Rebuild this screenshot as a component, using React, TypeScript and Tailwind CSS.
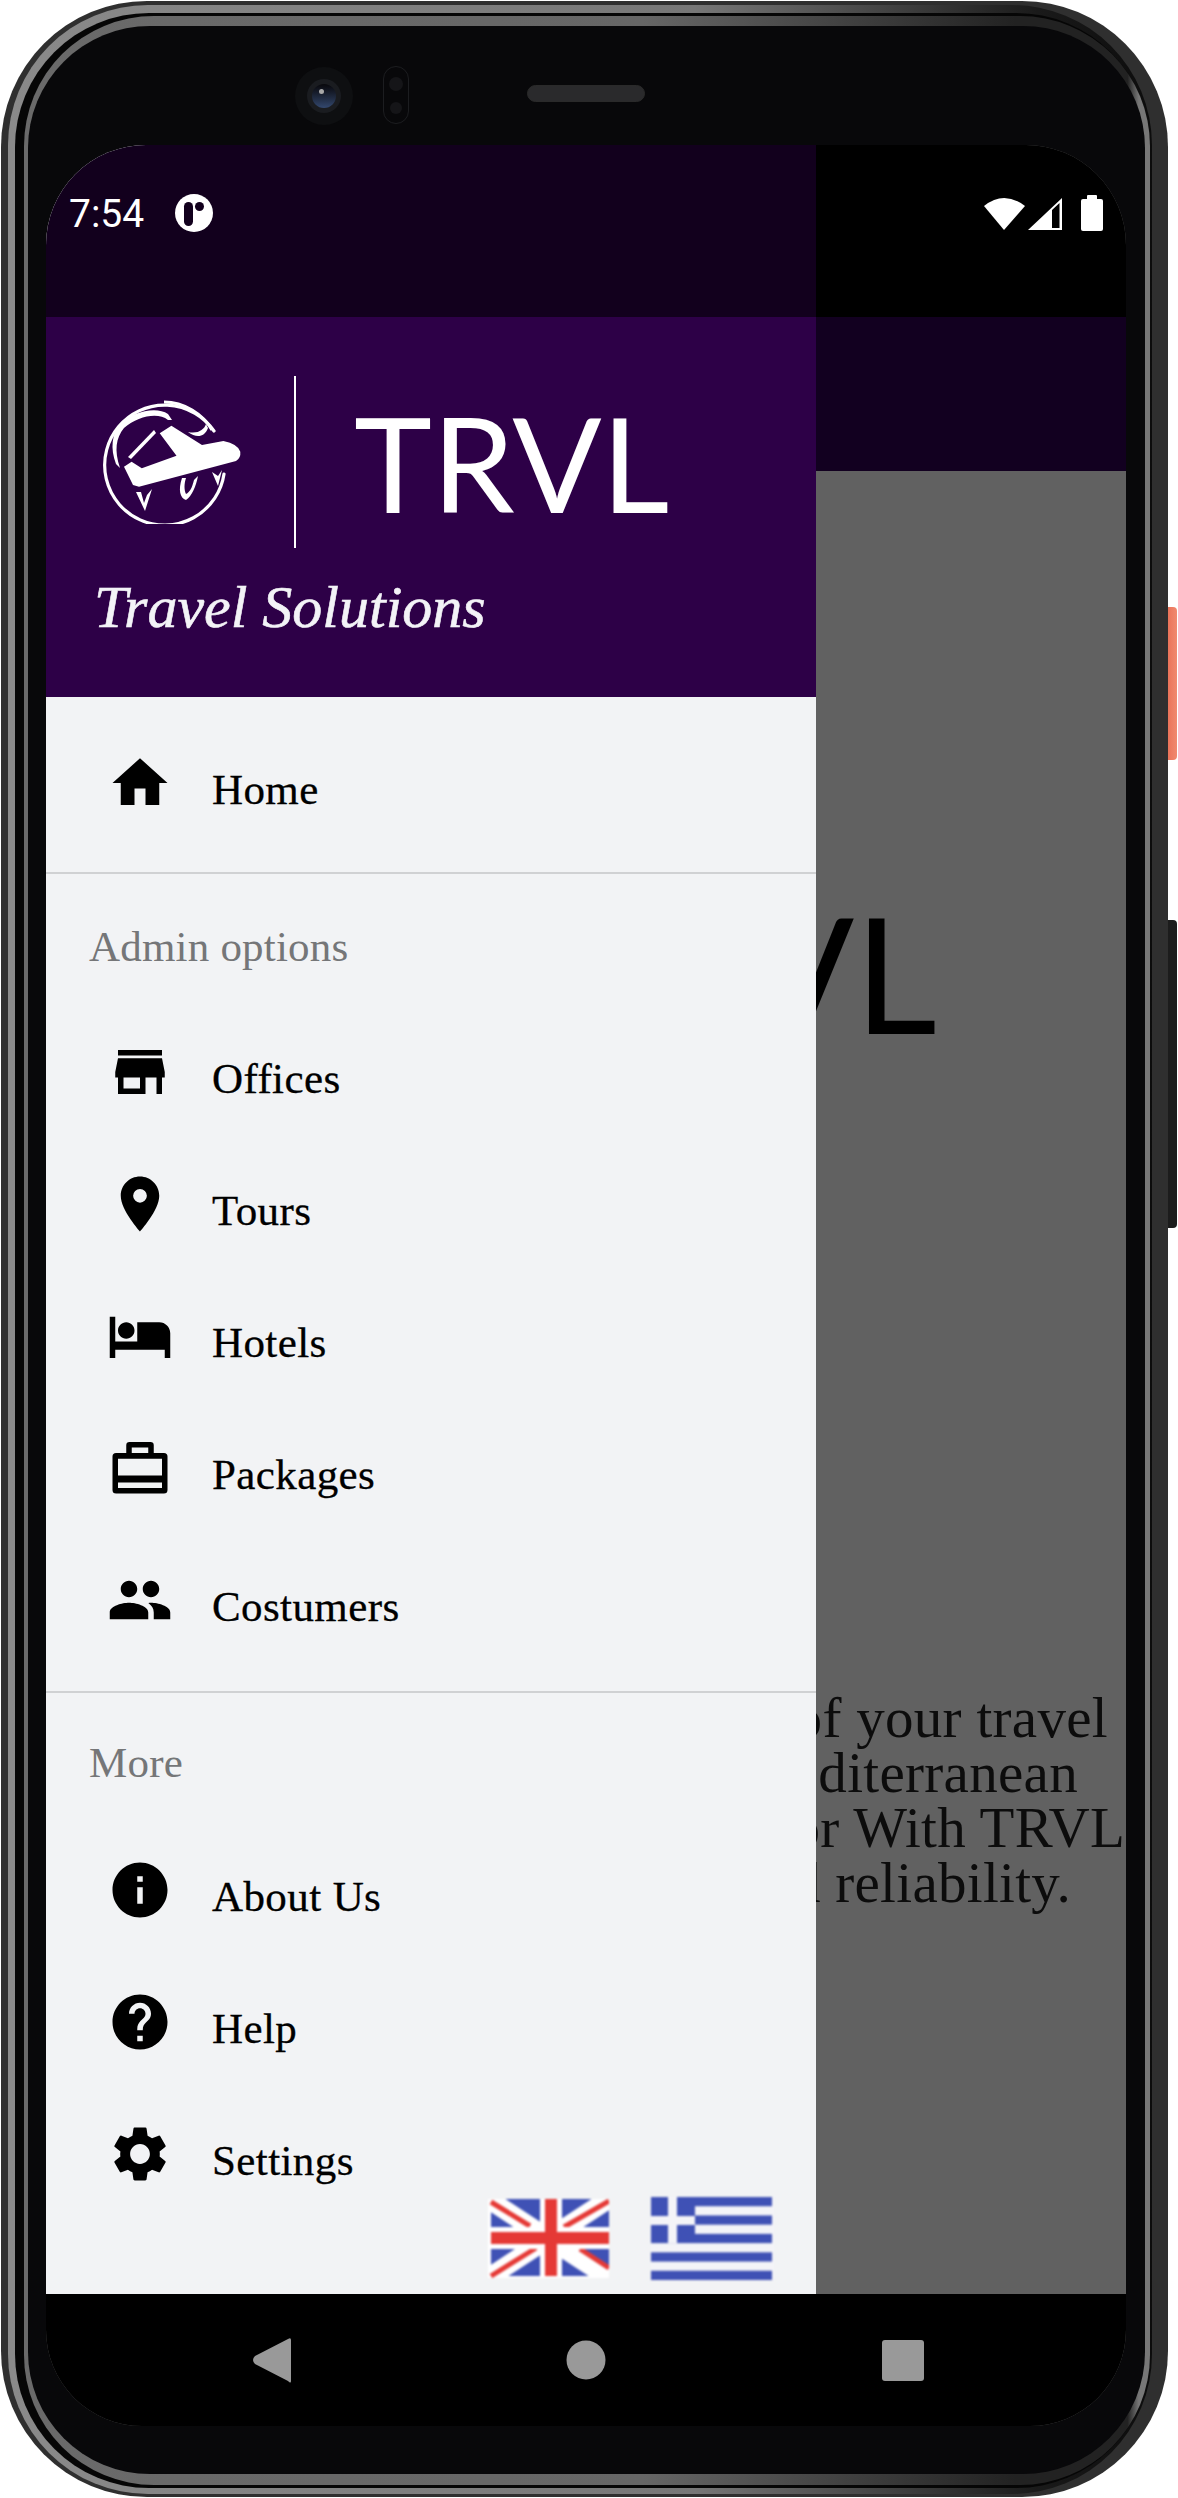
import React from "react";
import {
  MdHome,
  MdStore,
  MdPlace,
  MdHotel,
  MdPeople,
  MdInfo,
  MdHelp,
  MdSettings,
} from "react-icons/md";

type IconProps = { size?: number; className?: string };
type Item = { label: string; icon: React.ComponentType<IconProps> };

function Briefcase({ size = 66, className }: IconProps) {
  return (
    <svg viewBox="0 0 24 24" width={size} height={size} className={className} fill="currentColor">
      <path
        fillRule="evenodd"
        d="M8.2 2.5 H15.8 Q17 2.5 17 3.7 V6.5 H20.7 Q22 6.5 22 7.8 V20 Q22 21.3 20.7 21.3 H3.3 Q2 21.3 2 20 V7.8 Q2 6.5 3.3 6.5 H7 V3.7 Q7 2.5 8.2 2.5 Z M9 4.5 V6.5 H15 V4.5 Z M4 8.6 V14.7 H20 V8.6 Z M4 17.3 V19.3 H20 V17.3 Z"
      />
    </svg>
  );
}

function Row({ label, icon: Icon }: Item) {
  return (
    <div className="flex h-[132px] items-center pl-[61px]">
      <Icon size={66} className="shrink-0 text-black" />
      <span className="ml-[39px] pt-[13px] font-['Liberation_Serif',serif] text-[43px] leading-[50px] tracking-[0.4px] text-black [-webkit-text-stroke:0.3px_#000]">
        {label}
      </span>
    </div>
  );
}

function Label({ children }: { children: React.ReactNode }) {
  return (
    <div className="flex h-[50px] items-center pl-[43px] font-['Liberation_Serif',serif] text-[43px] leading-[50px] tracking-[0.2px] text-[#757678]">
      {children}
    </div>
  );
}

function Logo() {
  return (
    <svg viewBox="0 0 140 124" className="h-[124px] w-[140px] shrink-0" fill="none">
      <path d="M112 31 A60 60 0 1 0 122 74" stroke="#fff" strokeWidth="3.2" strokeLinecap="round" />
      <path d="M110 30 C101 14 82 2 62 2" stroke="#fff" strokeWidth="3" />
      <path
        d="M14 64 C8 48 10 34 18 24 C30 12 54 6 66 14 L70 20 L66 20 C56 12 36 16 22 28 C14 38 12 50 18 68 Z"
        fill="#fff"
      />
      <path d="M26 57 L52 30 L54 33 L29 59 Z" fill="#fff" />
      <path d="M86 32 C96 34 102 30 104 24 L106 28 C102 38 94 38 86 32 Z" fill="#fff" />
      <path
        d="M57.7 33.3 L69.4 25.7 L100 45 L121.4 41 Q136 44 138.3 51.7 Q139 58 134 61 L37 86.7 L31 85 L22 66.7 L29.6 61.7 L39.8 68.3 L74.5 55.7 Z"
        fill="#fff"
      />
      <path d="M34 92 L43 111 L50 89 L45 95 L42 103 L39 92 Z" fill="#fff" />
      <path d="M80 78 C76 90 78 98 84 100 C90 96 94 86 96 76 L92 80 C90 88 88 92 84 94 C82 90 82 84 84 78 Z" fill="#fff" />
      <path d="M110 72 L116 86 L120 70 L116 76 Z" fill="#fff" />
    </svg>
  );
}

function UKFlag() {
  return (
    <svg viewBox="0 0 121 79" className="h-[79px] w-[121px] blur-[1px]">
      <rect width="121" height="79" fill="#fff" />
      <rect x="3" y="0" width="118" height="77" fill="#3f51b5" />
      <path d="M0 0 L121 79 M121 0 L0 79" stroke="#fff" strokeWidth="19" />
      <path d="M3 3 L42 27 M121 2 L76 28 M3 77 L48 49 M121 69 L92 50" stroke="#e53935" strokeWidth="5" />
      <rect x="52" y="0" width="22" height="79" fill="#fff" />
      <rect x="0" y="28" width="121" height="22" fill="#fff" />
      <rect x="57" y="0" width="12" height="77" fill="#e53935" />
      <rect x="3" y="33" width="118" height="12" fill="#e53935" />
    </svg>
  );
}

function GreekFlag() {
  const stripes = [0, 2, 4, 6, 8];
  return (
    <svg viewBox="0 0 123 83" className="h-[83px] w-[123px] blur-[1px]">
      <rect width="123" height="83" fill="#f4f4f8" />
      {stripes.map((s) => (
        <rect key={s} x="0" y={s * 9.22} width="121" height="9.22" fill="#3f51b5" />
      ))}
      <rect x="0" y="0" width="44" height="46" fill="#3f51b5" />
      <rect x="17" y="0" width="9" height="46" fill="#f4f4f8" />
      <rect x="0" y="19" width="44" height="9" fill="#f4f4f8" />
    </svg>
  );
}

export default function App() {
  return (
    <div className="relative h-[2498px] w-[1178px] overflow-hidden bg-white">
      {/* side buttons */}
      <div className="absolute left-[1164px] top-[607px] h-[153px] w-[13px] rounded-r-[4px] bg-gradient-to-r from-[#e8694f] to-[#f08a70]" />
      <div className="absolute left-[1164px] top-[920px] h-[308px] w-[13px] rounded-r-[4px] bg-[#1c1c1c]" />

      {/* phone frame */}
      <div className="absolute left-[1px] top-[1px] h-[2496px] w-[1167px] rounded-[146px] bg-[#2f2f2f] pb-[3px] pl-[7px] pr-[16px] pt-[4px]">
        <div className="h-full rounded-[140px] bg-[linear-gradient(90deg,#8a8a8a_0%,#777777_60%,#1a1a1a_90%,#0c0c0c_100%)] pb-[6px] pl-[7px] pr-[2px] pt-[8px]">
          <div className="h-full rounded-[134px] bg-[#060606] pb-[3px] pl-[9px] pt-[3px]">
            <div className="h-full rounded-[130px] bg-[linear-gradient(90deg,#6a6a6a_0%,#666666_55%,#222222_88%,#222222_98%,#777777_99%)] pb-[11px] pl-[4px] pr-[5px] pt-[10px]">
              <div className="relative flex h-full flex-col rounded-[122px] bg-[#08080a] pb-[48px] pl-[18px] pr-[19px] pt-[119px]">
                {/* camera, sensor, speaker */}
                <div className="absolute left-[267px] top-[41px] flex h-[58px] w-[58px] items-center justify-center rounded-full bg-[#0e0f11]">
                  <div className="relative h-[34px] w-[34px] rounded-full bg-[#1a1c20]">
                    <div className="absolute left-[5px] top-[5px] h-[24px] w-[24px] rounded-full bg-gradient-to-b from-[#08080c] to-[#33486e]" />
                    <div className="absolute left-[12px] top-[10px] h-[5px] w-[5px] rounded-full bg-[#a8a8a8]" />
                  </div>
                </div>
                <div className="absolute left-[355px] top-[40px] flex h-[58px] w-[26px] flex-col items-center justify-around rounded-full border border-[#1c1d20] py-[4px]">
                  <div className="h-[14px] w-[14px] rounded-full bg-[#151518]" />
                  <div className="h-[12px] w-[12px] rounded-full bg-[#151518]" />
                </div>
                <div className="absolute left-[499px] top-[59px] h-[17px] w-[118px] rounded-full border border-[#2a2a2a] bg-[#2a2a2c]" />

                {/* screen */}
                <div className="relative flex h-full flex-col overflow-hidden rounded-t-[100px] rounded-b-[96px] bg-[#616161]">
                  <div className="flex h-[172px] shrink-0 items-start justify-end bg-black pr-[22px] pt-[50px]">
                    <svg viewBox="0 0 122 36" className="h-[36px] w-[122px]">
                      <path d="M2 11 Q22 -5 43 11 L22 35 Z" fill="#fff" />
                      <path d="M46 35 L80 3 V35 Z M70 33 V15 L77.5 8 V33 Z" fill="#fff" fillRule="evenodd" />
                      <rect x="99" y="4" width="22" height="32" rx="2" fill="#fff" />
                      <rect x="105" y="0" width="10" height="5" rx="1" fill="#fff" />
                    </svg>
                  </div>
                  <div className="h-[154px] shrink-0 bg-[#120020]" />
                  <div className="flex flex-1 flex-col bg-[#616161]">
                    <div className="mt-[415px] self-end pr-[189px] font-['Lato',sans-serif] text-[161px] leading-[171px] text-black">
                      VL
                    </div>
                    <div className="mt-[633px] flex flex-col items-end font-['Liberation_Serif',serif] text-[57px] leading-[55px] tracking-[0.3px] text-[#0c0c0c]">
                      <div className="whitespace-nowrap pr-[18px]">of your travel</div>
                      <div className="whitespace-nowrap pr-[48px]">diterranean</div>
                      <div className="whitespace-nowrap pr-[1px]">or With TRVL</div>
                      <div className="whitespace-nowrap pr-[55px]">d reliability.</div>
                    </div>
                  </div>
                  <div className="h-[132px] shrink-0 bg-black" />

                  {/* nav icons lie over the bar */}
                  <svg viewBox="0 0 1080 132" className="absolute bottom-0 left-0 h-[132px] w-[1080px]">
                    <path d="M245 46 L245 87 Q245 90 242 87 L209 70 Q205 66 209 62 L242 45 Q245 43 245 46 Z" fill="#999" />
                    <circle cx="540" cy="66" r="19.5" fill="#999" />
                    <rect x="836" y="46" width="42" height="41" rx="3" fill="#999" />
                  </svg>

                  {/* drawer */}
                  <div className="absolute bottom-[132px] left-0 top-0 flex w-[770px] flex-col overflow-hidden bg-[#f2f3f5]">
                    <div className="flex h-[172px] shrink-0 items-start bg-[#12001d] pl-[23px] pt-[47px]">
                      <span className="font-['Roboto',sans-serif] text-[39px] leading-[44px] text-white">7:54</span>
                      <svg viewBox="0 0 38 38" className="ml-[31px] mt-[2px] h-[38px] w-[38px]">
                        <circle cx="19" cy="19" r="19" fill="#fff" />
                        <rect x="9" y="8" width="9" height="24" rx="4.5" fill="#12001d" />
                        <circle cx="24.5" cy="12.5" r="4.5" fill="#12001d" />
                      </svg>
                    </div>
                    <div className="h-[380px] shrink-0 bg-[#2d0047] pl-[56px] pt-[59px]">
                      <div className="flex h-[172px] items-center">
                        <Logo />
                        <div className="ml-[52px] h-full w-[2px] bg-white" />
                        <span className="ml-[58px] font-['Lato',sans-serif] text-[132px] leading-[150px] text-white">
                          TRVL
                        </span>
                      </div>
                      <div className="-ml-[8px] mt-[24px] font-['Liberation_Serif',serif] text-[60px] italic leading-[70px] text-[#f3f3f7] [-webkit-text-stroke:0.6px_#f3f3f7]">
                        Travel Solutions
                      </div>
                    </div>
                    <div className="flex min-h-0 flex-1 flex-col pt-[20px]">
                      <Row label="Home" icon={MdHome} />
                      <div className="mt-[23px] h-[2px] shrink-0 bg-[#d0d1d3]" />
                      <div className="mt-[48px]">
                        <Label>Admin options</Label>
                      </div>
                      <div className="mt-[34px]">
                        <Row label="Offices" icon={MdStore} />
                        <Row label="Tours" icon={MdPlace} />
                        <Row label="Hotels" icon={MdHotel} />
                        <Row label="Packages" icon={Briefcase} />
                        <Row label="Costumers" icon={MdPeople} />
                      </div>
                      <div className="mt-[25px] h-[2px] shrink-0 bg-[#d0d1d3]" />
                      <div className="mt-[45px]">
                        <Label>More</Label>
                      </div>
                      <div className="mt-[36px]">
                        <Row label="About Us" icon={MdInfo} />
                        <Row label="Help" icon={MdHelp} />
                        <Row label="Settings" icon={MdSettings} />
                      </div>
                    </div>
                    {/* language flags */}
                    <div className="absolute bottom-[14px] left-[442px] flex items-end gap-[42px]">
                      <div className="mb-[2px]">
                        <UKFlag />
                      </div>
                      <GreekFlag />
                    </div>
                  </div>
                </div>
              </div>
            </div>
          </div>
        </div>
      </div>
    </div>
  );
}
